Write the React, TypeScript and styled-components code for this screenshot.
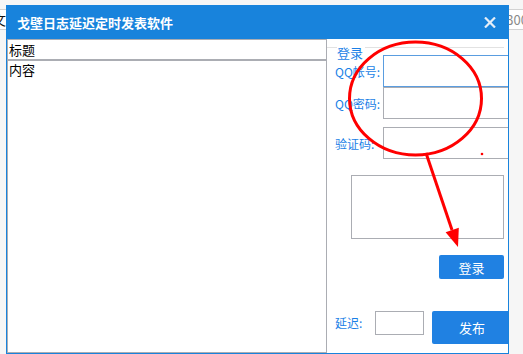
import { FC, ReactElement } from "react";
import styled, { createGlobalStyle } from "styled-components";

const blue = "#1883dc";
const labelBlue = "#1a7fe6";
const boxGray = "#abadb3";
const cjk = `"Microsoft YaHei", "Noto Sans CJK SC", "Noto Sans", sans-serif`;

const GlobalStyle = createGlobalStyle`
  html, body {
    margin: 0;
    padding: 0;
    background: #f6f6f6;
    font-family: ${cjk};
  }
`;

const Desktop = styled.div`
  position: relative;
  width: 523px;
  height: 354px;
  overflow: hidden;
`;

const BackdropBar = styled.div`
  margin-top: 9px;
  height: 19px;
  background: #ffffff;
  border-top: 1px solid #d2d2d2;
  border-bottom: 1px solid #d2d2d2;
  display: flex;
  align-items: center;
  justify-content: space-between;
  font-size: 14px;
  line-height: 19px;

  span:first-child {
    margin-left: -8px;
    color: #111;
  }
  span:last-child {
    margin-right: -5px;
    color: #8a8a8a;
    font-size: 13px;
  }
`;

const Window = styled.div`
  position: absolute;
  left: 6px;
  top: 5px;
  width: 503px;
  height: 349px;
  box-sizing: border-box;
  border: 1px solid ${blue};
  border-top: none;
  background: #ffffff;
  display: flex;
  flex-direction: column;
  overflow: hidden;
`;

const TitleBar = styled.div`
  height: 34px;
  flex: none;
  background: ${blue};
  display: flex;
  align-items: center;
  justify-content: space-between;
  padding: 0 12px 0 10px;
  color: #ffffff;
  font-size: 13px;
  font-weight: bold;
`;

const CloseButton = styled.svg`
  width: 12px;
  height: 11px;
  margin-top: 1px;
`;

const Body = styled.div`
  flex: 1;
  display: grid;
  grid-template-columns: 320px 1fr;
  min-height: 0;
`;

const EditorColumn = styled.div`
  display: flex;
  flex-direction: column;
`;

const TitleField = styled.div`
  height: 22px;
  flex: none;
  box-sizing: border-box;
  border: 1px solid ${boxGray};
  border-bottom: 2px solid ${boxGray};
  padding-left: 1px;
  font-size: 13px;
  line-height: 20px;
  color: #000;
`;

const ContentField = styled.div`
  flex: 1;
  box-sizing: border-box;
  border: 1px solid ${boxGray};
  border-top: none;
  padding: 1px 0 0 1px;
  font-size: 13px;
  line-height: 16px;
  color: #000;
`;

const SidePanel = styled.div`
  display: flex;
  flex-direction: column;
  padding-right: 4px;
  overflow: hidden;
`;

const GroupHeader = styled.div`
  height: 16px;
  flex: none;
  background: linear-gradient(#e2e2e2, #e2e2e2) 0 8px / 100% 1px no-repeat;
  padding-left: 10px;

  span {
    display: inline-block;
    background: #fff;
    color: ${labelBlue};
    font-size: 13px;
    line-height: 15px;
    padding-top: 1px;
    padding-right: 2px;
  }
`;

const FieldRow = styled.div<{ $gap?: number }>`
  display: flex;
  align-items: center;
  margin-top: ${(p) => p.$gap ?? 0}px;
  height: 32px;
  flex: none;
`;

const Label = styled.span<{ $width: number }>`
  width: ${(p) => p.$width}px;
  flex: none;
  padding-left: 8px;
  box-sizing: border-box;
  color: ${labelBlue};
  font-size: 12px;
  white-space: nowrap;
`;

const TextBox = styled.div<{ $focused?: boolean }>`
  flex: none;
  width: 140px;
  height: 32px;
  box-sizing: border-box;
  border: 1px solid ${(p) => (p.$focused ? "#5a9de0" : boxGray)};
  background: #fff;
`;

const CaptchaBox = styled.div`
  margin: 16px 0 0 24px;
  width: 153px;
  height: 64px;
  flex: none;
  box-sizing: border-box;
  border: 1px solid ${boxGray};
`;

const ActionButton = styled.div<{ $w: number; $h: number }>`
  width: ${(p) => p.$w}px;
  height: ${(p) => p.$h}px;
  flex: none;
  background: #2081e2;
  border-radius: 2px;
  color: #fff;
  font-size: 13px;
  display: flex;
  align-items: center;
  justify-content: center;
`;

const LoginRow = styled.div`
  display: flex;
  justify-content: flex-end;
  margin-top: 16px;
`;

const DelayRow = styled.div`
  display: flex;
  align-items: flex-start;
  margin-top: 32px;
`;

const DelayLabel = styled(Label)`
  line-height: 24px;
`;

const DelayBox = styled.div`
  width: 49px;
  height: 24px;
  flex: none;
  box-sizing: border-box;
  border: 1px solid ${boxGray};
  margin-right: 8px;
`;

const Annotation = styled.svg`
  position: absolute;
  left: 0;
  top: 0;
  pointer-events: none;
`;

const App: FC = (): ReactElement => {
  return (
    <>
      <GlobalStyle />
      <Desktop>
        <BackdropBar>
          <span>文</span>
          <span>300</span>
        </BackdropBar>
        <Window>
          <TitleBar>
            <span>戈壁日志延迟定时发表软件</span>
            <CloseButton viewBox="0 0 12 11">
              <path d="M1 0.5 L11 10.5 M11 0.5 L1 10.5" stroke="#e4eef8" strokeWidth="2.2" />
            </CloseButton>
          </TitleBar>
          <Body>
            <EditorColumn>
              <TitleField>标题</TitleField>
              <ContentField>内容</ContentField>
            </EditorColumn>
            <SidePanel>
              <GroupHeader>
                <span>登录</span>
              </GroupHeader>
              <FieldRow>
                <Label $width={56}>QQ帐号:</Label>
                <TextBox $focused />
              </FieldRow>
              <FieldRow>
                <Label $width={56}>QQ密码:</Label>
                <TextBox />
              </FieldRow>
              <FieldRow $gap={8}>
                <Label $width={56}>验证码:</Label>
                <TextBox />
              </FieldRow>
              <CaptchaBox />
              <LoginRow>
                <ActionButton $w={65} $h={24}>登录</ActionButton>
              </LoginRow>
              <DelayRow>
                <DelayLabel $width={48}>延迟:</DelayLabel>
                <DelayBox />
                <ActionButton $w={80} $h={33}>发布</ActionButton>
              </DelayRow>
            </SidePanel>
          </Body>
        </Window>
        <Annotation width="523" height="354" viewBox="0 0 523 354">
          <ellipse cx="415.5" cy="98.5" rx="66" ry="56.5" fill="none" stroke="#ff0000" strokeWidth="3" />
          <line x1="426" y1="153" x2="452" y2="230" stroke="#ff0000" strokeWidth="3" />
          <polygon points="445.6,232.3 458.8,227.7 458,247" fill="#ff0000" />
          <circle cx="482" cy="154" r="1.3" fill="#ff0000" />
        </Annotation>
      </Desktop>
    </>
  );
};

export default App;
